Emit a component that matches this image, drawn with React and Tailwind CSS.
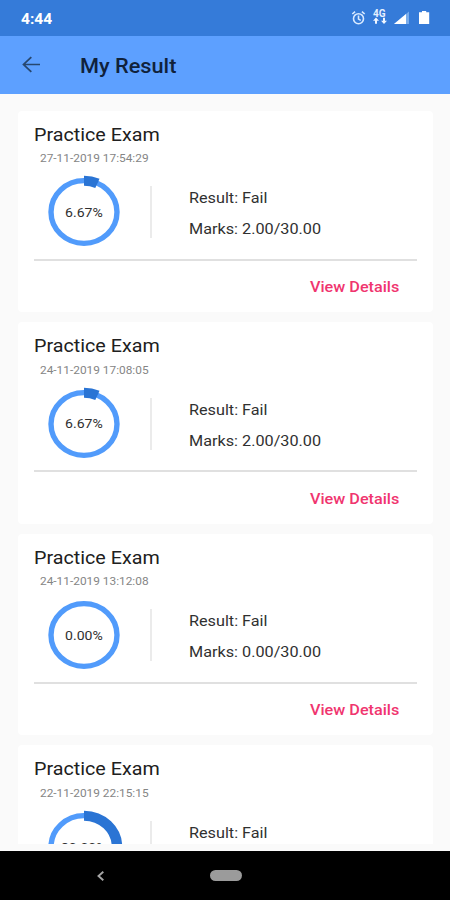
const results = [
  { date: "27-11-2019 17:54:29", percent: 6.67, marks: "2.00/30.00" },
  { date: "24-11-2019 17:08:05", percent: 6.67, marks: "2.00/30.00" },
  { date: "24-11-2019 13:12:08", percent: 0, marks: "0.00/30.00" },
  { date: "22-11-2019 22:15:15", percent: 30, marks: "9.00/30.00" },
];

function Ring({ percent }) {
  return (
    <div className="grid h-[76px] w-20 shrink-0 place-items-center">
      <svg className="col-start-1 row-start-1 h-[76px] w-20" viewBox="0 0 80 80" preserveAspectRatio="none">
        <circle cx="40" cy="40" r="33" fill="none" stroke="#519bfb" strokeWidth="5.4" />
        {percent > 0 && (
          <circle
            cx="40"
            cy="40"
            r="33"
            fill="none"
            stroke="#2a74d4"
            strokeWidth="10.5"
            pathLength="100"
            strokeDasharray={`${percent} 100`}
            transform="rotate(-90 40 40)"
          />
        )}
      </svg>
      <span className="col-start-1 row-start-1 scale-x-[1.05] pt-px text-[13.4px] leading-4 text-[#303030]">
        {percent.toFixed(2)}%
      </span>
    </div>
  );
}

function ResultCard({ date, percent, marks }) {
  return (
    <article className="h-[201.6px] shrink-0 rounded-sm bg-white px-4 pt-3">
      <h2 className="h-6 origin-left scale-x-[1.05] text-[18.8px] leading-6 text-[#202020]">Practice Exam</h2>
      <p className="mt-[4.8px] ml-1.5 h-4 origin-left scale-x-[1.05] text-[11.3px] leading-4 text-[#858585]">{date}</p>
      <div className="mt-[6px] flex h-[78px] items-center">
        <div className="ml-[9.5px] flex">
          <Ring percent={percent} />
        </div>
        <div className="ml-[26px] h-[52px] w-0.5 bg-[#ebebeb]" />
        <div className="ml-[37.5px] origin-left scale-x-[1.06] pt-[3.5px] text-[15.3px] leading-[31px] text-[#303030]">
          <p>Result: Fail</p>
          <p>Marks: {marks}</p>
        </div>
      </div>
      <div className="mt-[7.5px] h-0.5 bg-[#e0e0e0]" />
      <div className="flex justify-end pt-[14.3px] pr-[17.5px]">
        <button className="origin-right scale-x-[1.06] text-[15.3px] leading-6 font-medium text-[#f0356f]">View Details</button>
      </div>
    </article>
  );
}

function StatusIcons() {
  return (
    <svg className="h-5 w-[82px]" viewBox="0 0 82 20" fill="none">
      <g stroke="#d9eaff" strokeWidth="1.6">
        <circle cx="8.5" cy="10.7" r="5" />
        <path d="M8.5 7.5v3.6l2.3 1.3M2.3 6l2.8-2.4M14.7 6l-2.8-2.4" />
      </g>
      <text x="23" y="8.7" fontSize="10" fontWeight="700" fill="#e5f0ff">4G</text>
      <path d="M26 9.5l3 3.2h-2v3h-2v-3h-2zM34 16l-3-3.2h2v-3h2v3h2z" fill="#f0f6ff" />
      <path d="M44 16L59 3.5V16z" fill="#79aceb" />
      <path d="M44 16L56 6V16z" fill="#fff" />
      <path d="M69 4.2h3v-1.2h4.2v1.2h3V16H69z" fill="#fff" />
    </svg>
  );
}

export default function App() {
  return (
    <div className="flex h-[900px] w-[450px] flex-col overflow-hidden bg-[#fafafa] font-[Roboto,'Liberation_Sans',sans-serif]">
      <div className="flex h-9 shrink-0 items-center justify-between bg-[#357bd9] pr-[18px] pl-[20.5px] text-white">
        <span className="origin-left scale-x-[1.05] pt-0.5 text-[14.8px] font-bold">4:44</span>
        <StatusIcons />
      </div>
      <header className="flex h-[57.5px] shrink-0 items-center bg-[#5da0ff] pl-[22px]">
        <svg className="h-[17px] w-[18px]" viewBox="0 0 18 18" preserveAspectRatio="none" fill="none" stroke="#27476f" strokeWidth="1.8">
          <path d="M18 9H1.5M9.3 1.3L1.5 9l7.8 7.7" />
        </svg>
        <h1 className="ml-[39.5px] origin-left scale-x-[1.05] pt-[4px] text-[20.7px] font-medium text-[#10223b]">My Result</h1>
      </header>
      <main className="mt-[17px] mr-[17px] ml-[18px] flex h-[733.5px] shrink-0 flex-col gap-[10px] overflow-hidden">
        {results.map((result) => (
          <ResultCard key={result.date} {...result} />
        ))}
      </main>
      <nav className="mt-auto flex h-[49px] shrink-0 items-center bg-black">
        <svg className="ml-[97px] h-[10px] w-[7px]" viewBox="0 0 7 10" fill="none" stroke="#a5a5a5" strokeWidth="1.9">
          <path d="M6.3.7L1.5 5l4.8 4.3" />
        </svg>
        <div className="ml-[106px] h-[11px] w-8 rounded-full bg-[#9b9b9b]" />
      </nav>
    </div>
  );
}
